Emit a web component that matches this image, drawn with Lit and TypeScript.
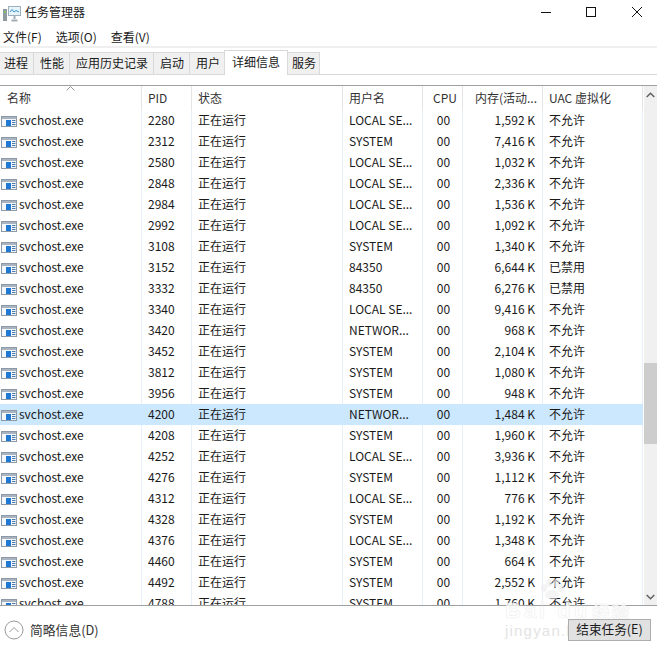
import { LitElement, html, css, svg } from "lit";
import { customElement } from "lit/decorators.js";

type Row = [string, string, string, string, string];
const S = "SYSTEM", L = "LOCAL SE...", N = "NETWOR...", U = "84350", NO = "不允许", OFF = "已禁用";
const rows: Row[] = [
  ["2280", L, "1,592 K", NO, ""], ["2312", S, "7,416 K", NO, ""], ["2580", L, "1,032 K", NO, ""],
  ["2848", L, "2,336 K", NO, ""], ["2984", L, "1,536 K", NO, ""], ["2992", L, "1,092 K", NO, ""],
  ["3108", S, "1,340 K", NO, ""], ["3152", U, "6,644 K", OFF, ""], ["3332", U, "6,276 K", OFF, ""],
  ["3340", L, "9,416 K", NO, ""], ["3420", N, "968 K", NO, ""], ["3452", S, "2,104 K", NO, ""],
  ["3812", S, "1,080 K", NO, ""], ["3956", S, "948 K", NO, ""], ["4200", N, "1,484 K", NO, "sel"],
  ["4208", S, "1,960 K", NO, ""], ["4252", L, "3,936 K", NO, ""], ["4276", S, "1,112 K", NO, ""],
  ["4312", L, "776 K", NO, ""], ["4328", S, "1,192 K", NO, ""], ["4376", L, "1,348 K", NO, ""],
  ["4460", S, "664 K", NO, ""], ["4492", S, "2,552 K", NO, ""], ["4788", S, "1,760 K", NO, ""],
];
const tabs = ["进程", "性能", "应用历史记录", "启动", "用户", "详细信息", "服务"];

const exeIcon = svg`<svg class="exe" width="16" height="11" viewBox="0 0 16 11">
  <rect x=".5" y=".5" width="15" height="10" fill="#f4f7fa" stroke="#8d99a6"/>
  <rect x="1" y="1" width="14" height="2" fill="#a9b4c0"/>
  <rect x="5" y="4" width="5" height="6" fill="#1e78d4"/>
  <path d="M11 4.5h3.5M11 6.5h3.5M11 8.5h3.5" stroke="#4a7ab0" fill="none"/>
</svg>`;

@customElement("app-root")
export class AppRoot extends LitElement {
  static styles = css`
    :host { display: block; width: 657px; height: 653px; position: relative; overflow: hidden; background: #fff;
      font-family: "Noto Sans CJK SC", "Liberation Sans", sans-serif; font-size: 12px; color: #1a1a1a; }
    .title { height: 25px; display: flex; align-items: center; }
    .app-icon { margin-left: 3px; margin-top: 3px; flex: none; }
    .title-text { margin-left: 4px; font-size: 12px; padding-bottom: 2px; }
    .winbtns { margin-left: auto; display: flex; align-items: center; padding-bottom: 1px; }
    .winbtns svg { display: block; }
    .min { margin-right: 35px; } .max { margin-right: 36px; } .close { margin-right: 15px; }
    .menu { height: 21px; display: flex; gap: 14px; padding-left: 3px; align-items: center; font-size: 12px; padding-top: 2px; box-sizing: border-box; }
    .menu-rule { height: 2px; background: #f0f0f0; }
    .tabs { display: flex; height: 26px; align-items: flex-end; border-bottom: 1px solid #d9d9d9; }
    .tab { height: 22px; box-sizing: border-box; background: #f0f0f0; border-top: 1px solid #d9d9d9; border-right: 1px solid #d9d9d9;
      padding: 0 5px 2px 6px; display: flex; align-items: center; font-size: 12px; }
    .tab.first { padding-left: 4px; }
    .tab.on { height: 25px; margin-bottom: -1px; background: #fff; padding: 0 7px 4px; margin-left: -2px; border-left: 1px solid #d9d9d9; position: relative; z-index: 1; }
    .tab.last { padding: 0 3px 2px 4px; }
    .gap { height: 10px; }
    .table { position: relative; height: 521px; border-top: 1px solid #a0a0a0; border-bottom: 1px solid #a0a0a0; display: flex; box-sizing: border-box; }
    .list { width: 644px; flex: none; overflow: hidden; }
    .cols { display: grid; grid-template-columns: 142px 50px 151px 80px 40px 80px 100px; width: 643px; }
    .hd { height: 24px; }
    .hd > div { border-right: 1px solid #e5e5e5; box-sizing: border-box; display: flex; align-items: center; padding: 0 6px 2px; color: #333; }
    .row { height: 21px; }
    .row > div { border-right: 1px solid #e6f0fa; box-sizing: border-box; display: flex; align-items: center; padding: 0 6px 3px; white-space: nowrap; overflow: hidden; }
    .row.sel { background: #cce8ff; }
    .row.sel > div { border-right-color: #cce8ff; }
    .hd > div.c { justify-content: flex-end; padding-right: 5px; }
    .row > div.c { justify-content: center; padding: 0 0 3px 2px; }
    .hd > div.r { justify-content: flex-end; padding-right: 5px; }
    .row > div.r { justify-content: flex-end; padding-right: 7px; }
    .name { position: relative; }
    .hd .name { padding-left: 7px; }
    .row .name { padding: 0 0 3px 1px; gap: 2px; }
    .exe { flex: none; margin-top: 5px; }
    .caret { position: absolute; left: 66px; top: 0; }
    .bar { width: 13px; background: #f0f0f0; position: relative; }
    .thumb { position: absolute; left: 0; right: 0; top: 277px; height: 81px; background: #cdcdcd; }
    .arr { position: absolute; left: 0; right: 0; height: 17px; display: flex; align-items: center; justify-content: center; }
    .up { top: 0; } .down { bottom: 0; }
    .foot { height: 47px; display: flex; align-items: center; justify-content: space-between; padding: 0 6px 0 4px; }
    .more { display: flex; align-items: center; gap: 6px; font-size: 12.8px; color: #333; }
    .btn { width: 83px; height: 22px; box-sizing: border-box; border: 1px solid #adadad; background: #e1e1e1; display: flex; align-items: center; justify-content: center; font-size: 12.6px; padding-bottom: 2px; position: relative; z-index: 2; }
    .wm { position: absolute; z-index: 1; left: 505px; top: 579px; color: rgba(255,255,255,.78); -webkit-text-stroke: .6px rgba(228,228,228,.6); font-family: "Liberation Sans", sans-serif; pointer-events: none; white-space: nowrap; }
    .wm svg { display: block; margin-left: 34px; color: rgba(236,236,236,.6); }
    .wm1 { font-size: 22px; font-weight: 700; line-height: 20px; letter-spacing: 3px; display: flex; gap: 2px; align-items: center; }
    .wm1 span { font-family: "Noto Sans CJK SC", sans-serif; font-size: 18px; letter-spacing: 1px; }
    .wm2 { font-size: 15px; font-weight: 400; line-height: 16px; margin-top: 2px; letter-spacing: 1.2px; -webkit-text-stroke: 0 transparent; color: #e4e4e4; }
  `;

  render() {
    return html`
      <div class="title">
        <svg class="app-icon" width="18" height="16" viewBox="0 0 18 16">
          <rect x="5.5" y=".5" width="12" height="9" fill="#e6f4fb" stroke="#9db0bb"/>
          <path d="M7 6l2-2.5 2 2.5 2-1.5 3 1.5" stroke="#3b94cc" fill="none"/>
          <path d="M11.5 10v3M8.5 14.5h6" stroke="#a3aeb5" stroke-width="2" fill="none"/>
          <rect x="0" y="3" width="4" height="12" fill="#8f9aa1"/>
          <rect x="1" y="5" width="2" height="2" fill="#7ec36a"/>
        </svg>
        <span class="title-text">任务管理器</span>
        <div class="winbtns">
          <svg class="min" width="10" height="10" viewBox="0 0 10 10"><path d="M0 5.5h10" stroke="#111"/></svg>
          <svg class="max" width="10" height="10" viewBox="0 0 10 10"><rect x=".5" y=".5" width="9" height="9" fill="none" stroke="#111"/></svg>
          <svg class="close" width="10" height="10" viewBox="0 0 10 10"><path d="M0 0l10 10M10 0L0 10" stroke="#111" stroke-width="1"/></svg>
        </div>
      </div>
      <div class="menu"><span>文件(F)</span><span>选项(O)</span><span>查看(V)</span></div>
      <div class="menu-rule"></div>
      <div class="tabs">
        ${tabs.map((t, i) => html`<div class="tab ${i === 0 ? "first" : ""} ${i === 5 ? "on" : ""} ${i === 6 ? "last" : ""}">${t}</div>`)}
      </div>
      <div class="gap"></div>
      <div class="table">
        <div class="list">
          <div class="cols hd">
            <div class="name">名称<svg class="caret" width="9" height="5" viewBox="0 0 9 5"><path d="M.5 4.5l4-4 4 4" fill="none" stroke="#9a9a9a"/></svg></div>
            <div>PID</div><div>状态</div><div>用户名</div>
            <div class="c">CPU</div><div class="r">内存(活动...</div><div>UAC 虚拟化</div>
          </div>
          ${rows.map((r) => html`<div class="cols row ${r[4]}">
            <div class="name">${exeIcon}svchost.exe</div>
            <div>${r[0]}</div><div>正在运行</div><div>${r[1]}</div>
            <div class="c">00</div><div class="r">${r[2]}</div><div>${r[3]}</div>
          </div>`)}
        </div>
        <div class="bar">
          <div class="arr up"><svg width="9" height="6" viewBox="0 0 9 6"><path d="M.7 5l3.8-3.8L8.3 5" fill="none" stroke="#606060" stroke-width="1.5"/></svg></div>
          <div class="thumb"></div>
          <div class="arr down"><svg width="9" height="6" viewBox="0 0 9 6"><path d="M.7 1l3.8 3.8L8.3 1" fill="none" stroke="#606060" stroke-width="1.5"/></svg></div>
        </div>
      </div>
      <div class="foot">
        <div class="more">
          <svg width="20" height="20" viewBox="0 0 20 20"><circle cx="10" cy="10" r="9" fill="none" stroke="#999"/><path d="M5.5 12l4.5-4.5 4.5 4.5" fill="none" stroke="#999"/></svg>
          <span>简略信息(D)</span>
        </div>
        <div class="btn">结束任务(E)</div>
      </div>
      <div class="wm">
        <svg width="26" height="22" viewBox="0 0 26 22" fill="currentColor" stroke="none"><ellipse cx="5" cy="9" rx="3" ry="4"/><ellipse cx="10" cy="4" rx="3" ry="4"/><ellipse cx="17" cy="4" rx="3" ry="4"/><ellipse cx="22" cy="9" rx="3" ry="4"/><ellipse cx="13" cy="16" rx="7" ry="5"/></svg>
        <div class="wm1">Bai du<span>经验</span></div>
        <div class="wm2">jingyan.baidu.com</div>
      </div>
    `;
  }
}
